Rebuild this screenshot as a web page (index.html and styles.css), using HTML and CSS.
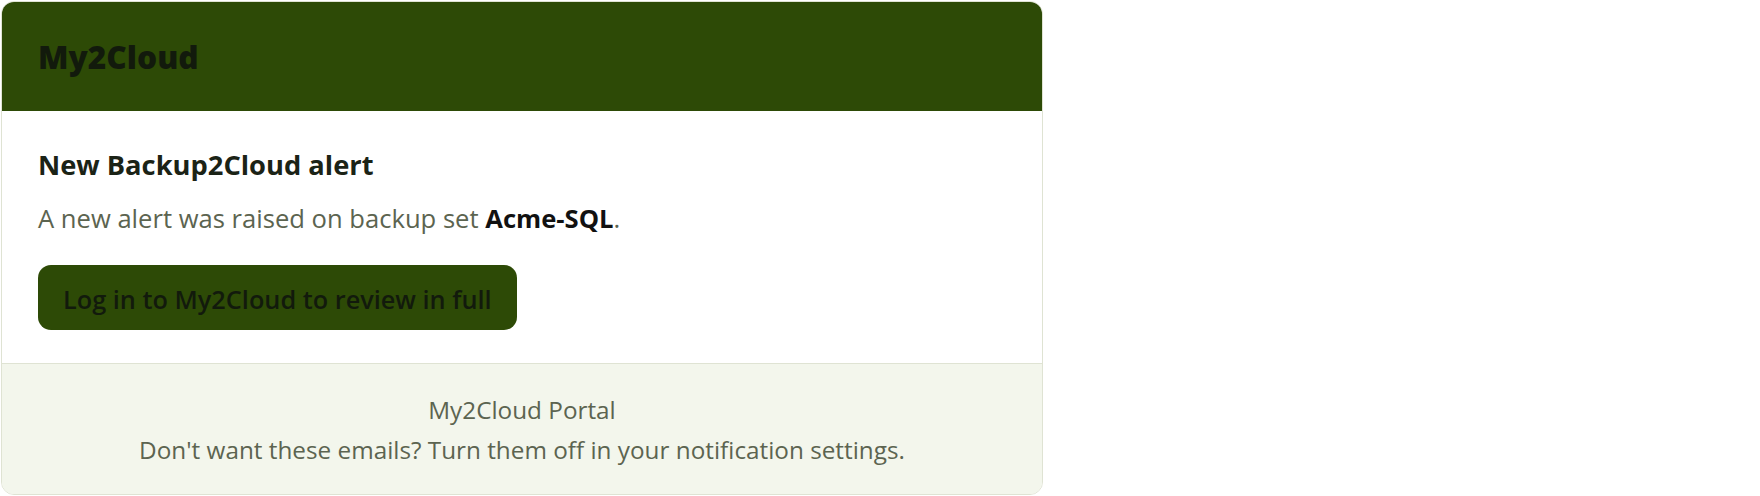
FILE: index.html
```html
<!DOCTYPE html>
<html lang="en">
  <head>
    <meta name="viewport" content="width=device-width, initial-scale=1.0" />
    <title>New Backup2Cloud alert</title>
    <link rel="stylesheet" href="styles.css">
  </head>
  <body>
    <div class="mail">
      <div class="mail-header">
        <h1>My2Cloud</h1>
      </div>
      <div class="mail-body">
        <h2>New Backup2Cloud alert</h2>
        <p>A new alert was raised on backup set <strong>Acme-SQL</strong>.</p>
        <a class="review-link" href="#">Log in to My2Cloud to review in full</a>
      </div>
      <div class="mail-footer">
        <p>My2Cloud Portal</p>
        <p>Don't want these emails? Turn them off in your notification settings.</p>
      </div>
    </div>
  </body>
</html>
```

FILE: styles.css
```css
* {
  padding: 0;
  margin: 0;
  box-sizing: border-box;
  font-family: "Open Sans", "Noto Sans", sans-serif;
}
body {
  background: #fff;
  padding: 1px 0 0 1px;
}
.mail {
  width: 1042px;
  border: 1px solid #dfe3d3;
  border-radius: 13px;
  overflow: hidden;
  background: #fff;
}
.mail-header {
  background: #2d4a06;
  padding: 35px 36px 34px;
}
.mail-header h1 {
  font-size: 31.6px;
  line-height: 40px;
  font-weight: 800;
  color: #121a0c;
}
.mail-body {
  padding: 36px 36px 33px;
  display: flex;
  flex-direction: column;
  align-items: flex-start;
}
.mail-body h2 {
  font-size: 27.3px;
  line-height: 36px;
  font-weight: 700;
  color: #1b2316;
  margin-bottom: 17px;
}
.mail-body p {
  font-size: 25.6px;
  line-height: 38px;
  color: #5c6450;
  margin-bottom: 27px;
}
.mail-body strong {
  color: #111;
}
.review-link {
  display: block;
  background: #2d4a06;
  color: #121a0c;
  text-decoration: none;
  font-size: 25.3px;
  line-height: 38px;
  font-weight: 600;
  padding: 15px 25px 12px;
  border-radius: 13px;
}
.mail-footer {
  background: #f3f6ec;
  border-top: 1px solid #dfe3d3;
  padding: 26px 38px 24px;
  text-align: center;
}
.mail-footer p {
  font-size: 24.3px;
  line-height: 40px;
  color: #5c6450;
}
```
